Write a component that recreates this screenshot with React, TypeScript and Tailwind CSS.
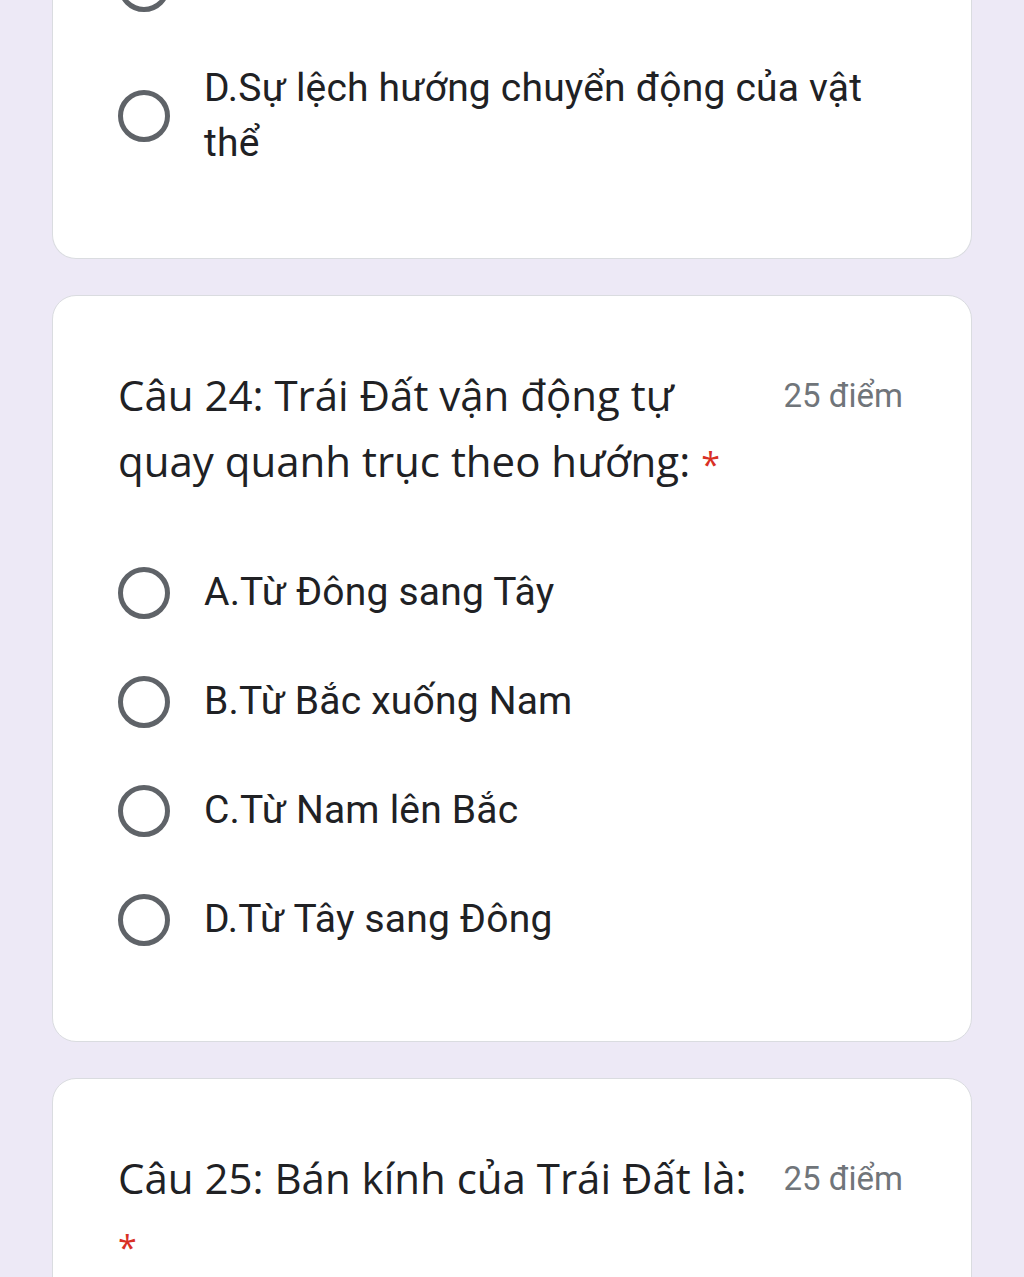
import React from "react";

const titleFont = { fontFamily: "'Open Sans', 'Noto Sans', sans-serif" };

function Radio({ label }: { label: React.ReactNode }) {
    return (
        <div className="flex items-center">
            <div className="w-[52px] h-[52px] shrink-0 rounded-full border-[5px] border-[#5f6368]" />
            <div className="ml-[34px] text-[39px] leading-[55px] tracking-[0.2px] text-[#202124] font-['Roboto',sans-serif]">
                {label}
            </div>
        </div>
    );
}

function Question({ title, options }: { title: string; options: string[] }) {
    return (
        <div className="bg-white rounded-[24px] border border-[#dadce0] pl-[65px] pr-[68px] pt-[66px] pb-[94px]">
            <div className="flex items-start justify-between">
                <div className="w-[640px] text-[42px] leading-[66px] text-[#202124]" style={titleFont}>
                    {title} <span className="text-[#d93025] text-[34px]">*</span>
                </div>
                <div className="shrink-0 pt-[16px] text-[33px] leading-[36px] text-[#70757a] font-['Roboto',sans-serif]">
                    25 điểm
                </div>
            </div>
            {options.length > 0 && (
                <div className="mt-[68px] flex flex-col gap-[54px]">
                    {options.map((o) => (
                        <Radio key={o} label={o} />
                    ))}
                </div>
            )}
        </div>
    );
}

export default function App() {
    return (
        <div className="h-[1277px] overflow-hidden bg-[#ede9f6] px-[52px]">
            {/* previous question, scrolled off the top */}
            <div className="-mt-[100px] bg-white rounded-b-[24px] border border-t-0 border-[#dadce0] pl-[65px] pr-[68px] pt-[58px] pb-[87px]">
                <div className="flex flex-col gap-[48px]">
                    <Radio label="C.Các mùa trên Trái Đất" />
                    <Radio
                        label={
                            <>
                                D.Sự lệch hướng chuyển động của vật
                                <br />
                                thể
                            </>
                        }
                    />
                </div>
            </div>

            <div className="mt-[36px]">
                <Question
                    title="Câu 24: Trái Đất vận động tự quay quanh trục theo hướng:"
                    options={[
                        "A.Từ Đông sang Tây",
                        "B.Từ Bắc xuống Nam",
                        "C.Từ Nam lên Bắc",
                        "D.Từ Tây sang Đông",
                    ]}
                />
            </div>

            <div className="mt-[36px]">
                <Question title="Câu 25: Bán kính của Trái Đất là:" options={[]} />
            </div>
        </div>
    );
}
